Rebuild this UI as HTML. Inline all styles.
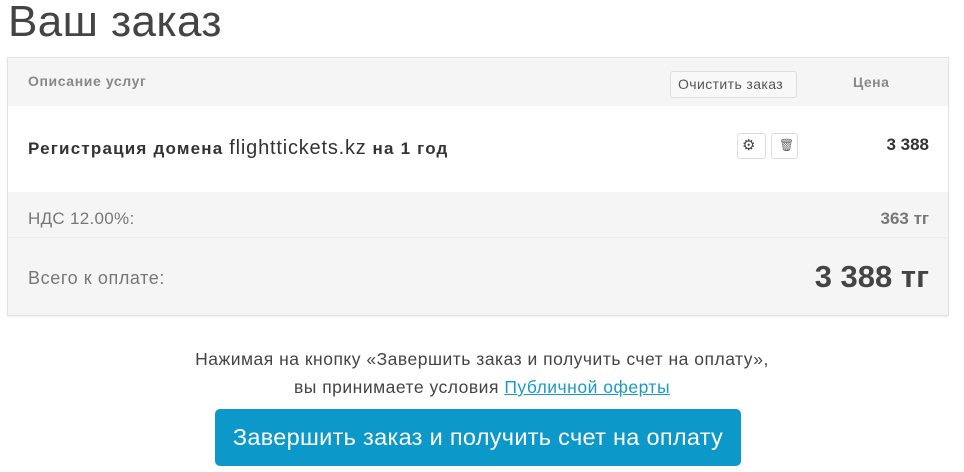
<!DOCTYPE html>
<html><head><meta charset="utf-8"><style>
*{margin:0;padding:0;box-sizing:border-box}
body{width:964px;height:472px;background:#fff;font-family:"Liberation Sans","DejaVu Sans",sans-serif;position:relative;overflow:hidden;color:#333}
.a{position:absolute;white-space:nowrap}
.r{position:absolute;white-space:nowrap;right:35px;text-align:right}
h1{position:absolute;left:8px;top:-3px;font-weight:300;font-size:44px;color:#444;letter-spacing:0.4px}
.panel{position:absolute;left:7px;top:57px;width:942px;height:259px;border:1px solid #e3e3e3;background:#f5f5f5;box-shadow:0 1px 2px rgba(0,0,0,.08)}
.row2{position:absolute;left:0;top:48px;width:940px;height:86px;background:#fff}
.line{position:absolute;left:0;width:940px;height:1px;background:#ececec}
.btnsm{position:absolute;border:1px solid #ddd;border-radius:3px;background:#f8f8f8}
</style></head><body>
<h1>Ваш заказ</h1>
<div class="panel">
 <div class="row2"></div>
 <div class="line" style="top:179px"></div>
</div>
<div class="a" style="left:28px;top:73px;font-size:14px;font-weight:bold;color:#888;letter-spacing:0.6px">Описание услуг</div>
<div class="btnsm" style="left:670px;top:71px;width:127px;height:27px"></div>
<div class="a" style="left:678px;top:76px;font-size:14px;color:#555;letter-spacing:0.4px">Очистить заказ</div>
<div class="a" style="left:853px;top:74px;font-size:14px;font-weight:bold;color:#888;letter-spacing:0.5px">Цена</div>
<div class="a" style="left:28px;top:137px;font-size:17px;font-weight:bold;color:#333;letter-spacing:1.2px">Регистрация домена <span style="font-weight:normal;font-size:20px;letter-spacing:0.8px">flighttickets.kz</span> на 1 год</div>
<div class="btnsm" style="left:737px;top:133px;width:29px;height:26px;background:#fff"></div>
<div class="a" style="left:742px;top:136px;font-size:15px;color:#444">⚙</div>
<div class="btnsm" style="left:771px;top:133px;width:27px;height:26px;background:#fff"></div>
<div class="a" style="left:779px;top:138px;font-size:12px;color:#666">🗑</div>
<div class="r" style="top:135px;font-size:17px;font-weight:bold;color:#333">3 388</div>
<div class="a" style="left:28px;top:209px;font-size:17px;color:#777;letter-spacing:0.3px">НДС 12.00%:</div>
<div class="r" style="top:209px;font-size:17px;color:#777;font-weight:bold">363 тг</div>
<div class="a" style="left:28px;top:268px;font-size:18px;color:#777;letter-spacing:0.6px">Всего к оплате:</div>
<div class="r" style="top:259px;font-size:31px;font-weight:bold;color:#444">3 388 тг</div>
<div class="a" style="left:0;width:964px;text-align:center;top:345px;font-size:17.5px;color:#444;line-height:28px;letter-spacing:0.5px">Нажимая на кнопку «Завершить заказ и получить счет на оплату»,<br>вы принимаете условия <span style="color:#1a9bc7;text-decoration:underline">Публичной оферты</span></div>
<div class="a" style="left:215px;top:409px;width:526px;height:57px;background:#0c98c8;border-radius:5px;color:#fff;font-size:23.5px;text-align:center;line-height:57px;letter-spacing:0.3px">Завершить заказ и получить счет на оплату</div>
</body></html>
